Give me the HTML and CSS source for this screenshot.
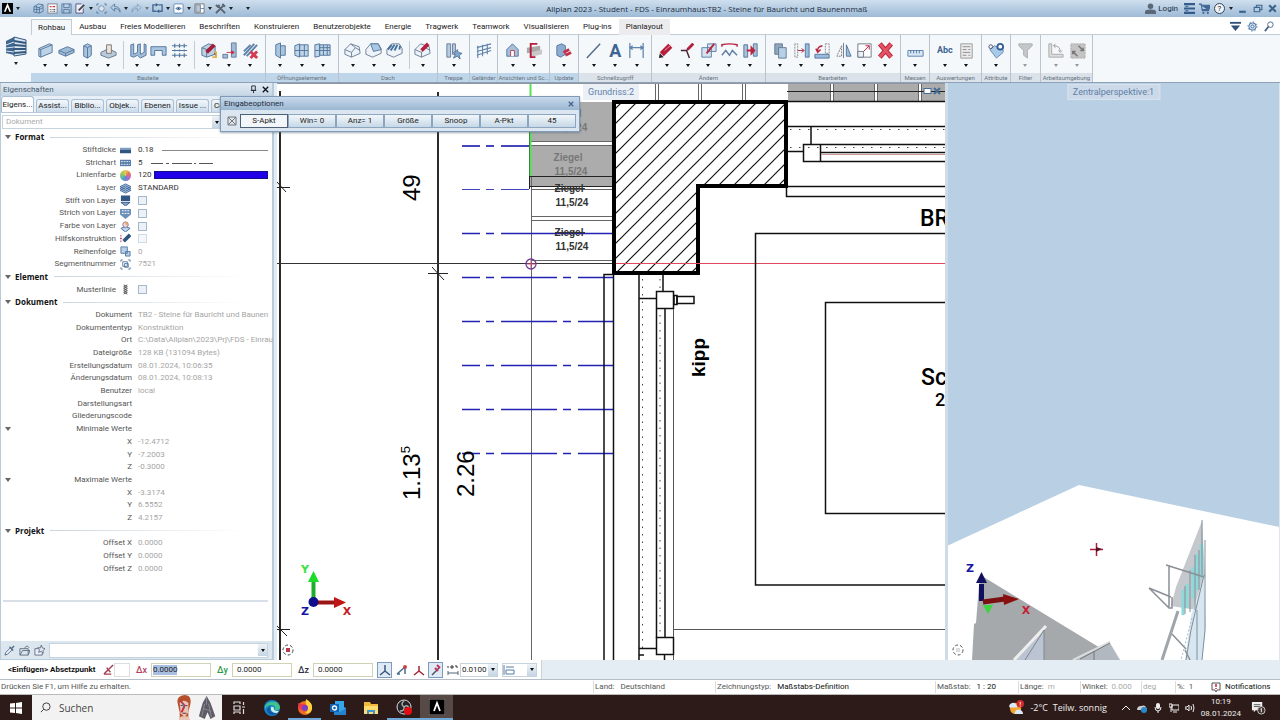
FILE: index.html
```html
<!DOCTYPE html>
<html lang="de">
<head>
<meta charset="utf-8">
<title>Allplan 2023</title>
<link rel="stylesheet" href="styles.css">
</head>
<body>
<div class="app">

<header class="titlebar">
  <div class="quick">
    <button class="qb logo" aria-label="Allplan"><svg viewBox="0 0 10 10"><rect width="10" height="10" fill="#050505"/><path d="M2.500 8L5 2L7.500 8" fill="none" stroke="#fff" stroke-width="1.500"/></svg></button><i class="dd"></i>
    <button class="qb first" aria-label="Neu"><svg viewBox="0 0 12 12"><path d="M1 4L6 1L11 2V9L7 11L1 10ZM1 7H7L11 5M7 4V11M4 3V10M1 4L7 5L11 2" class="ln"/></svg></button>
    <button class="qb" aria-label="Projekt"><svg viewBox="0 0 12 12"><rect x="1" y="1" width="10" height="10" fill="#fff" stroke="#75818e"/><path d="M3 4h2M6 4h3" stroke="#c33" stroke-width="1.500"/><path d="M3 7h1M5 7h1M7 7h2M3 9h1M5 9h1M7 9h2" stroke="#334" /></svg></button>
    <button class="qb" aria-label="Speichern"><svg viewBox="0 0 12 12"><path d="M1 1h10v10H1zM3 1v4h6V1M3 11V7h6v4" class="ln"/></svg></button>
    <button class="qb" aria-label="Bearbeiten"><svg viewBox="0 0 12 12"><path d="M9 6v5H1V1h6" fill="#eef" stroke="#557"/><path d="M4 8L10 2" stroke="#444" stroke-width="2"/></svg></button><i class="dd"></i>
    <button class="qb" aria-label="Suchen"><svg viewBox="0 0 12 12"><path d="M1 3V1h2M9 1h2v2M11 9v2H9M3 11H1V9" class="ln"/><circle cx="6" cy="6" r="3" fill="#dfe8f2" stroke="#7b8ea6"/></svg></button>
    <button class="qb" aria-label="Zurück"><svg viewBox="0 0 12 12"><path d="M11 10C11 5 8 4 5 4V1L1 5L5 9V6C8 6 10 7 11 10Z" class="ln"/></svg></button><i class="dd"></i>
    <button class="qb dim" aria-label="Vor"><svg viewBox="0 0 12 12"><path d="M1 10C1 5 4 4 7 4V1L11 5L7 9V6C4 6 2 7 1 10Z" class="ln"/></svg></button><i class="dd dim"></i>
    <button class="qb" aria-label="Wiederholen"><svg viewBox="0 0 12 12"><path d="M4 2H1v7h4M7 2h4v7H8" fill="none" stroke="#456a96" stroke-width="1.500"/><path d="M4 0l3 2-3 2zM8 7L5 9l3 2z" fill="#345781"/></svg></button><i class="dd"></i>
    <button class="qb" aria-label="Ansicht"><svg viewBox="0 0 12 12"><rect x="1" y="1" width="10" height="10" rx="1" fill="#fff" stroke="#6589b2"/><path d="M3 6Q6 3 9 6Q6 9 3 6Z" fill="#dce9f6" stroke="#4d759f"/><circle cx="6" cy="6" r="1" fill="#247"/></svg></button><i class="dd"></i>
    <button class="qb" aria-label="Fenster"><svg viewBox="0 0 12 12"><path d="M1 1h10v10H1z" fill="#fff" stroke="#777"/><path d="M2 2h5v8H2zM7 6h4" fill="#b8c7d5" stroke="#789"/></svg></button><i class="dd"></i>
    <button class="qb" aria-label="Werkzeuge"><svg viewBox="0 0 12 12"><path d="M1 11L9 3M3 3l8 8M1 2l2 2 2-2M8 1l3 3" fill="none" stroke="#59636f" stroke-width="2"/></svg></button><i class="dd"></i>
    <i class="dd more"></i>
  </div>
  <h1>Allplan 2023 - Student - FDS - Einraumhaus:TB2 - Steine für Bauricht und Baunennmaß</h1>
  <div class="winctl">
    <button class="login"><svg viewBox="0 0 10 10"><circle cx="5" cy="3" r="2.500" fill="#596777"/><path d="M0 10V8Q0 6 5 6Q10 6 10 8V10Z" fill="#596777"/></svg>Login</button>
    <button aria-label="Server"><svg viewBox="0 0 10 10"><path d="M0 1h10M0 5h10M0 9h10" stroke="#355c8c" stroke-width="2"/><path d="M1 3h3M1 7h3" stroke="#355c8c"/></svg></button>
    <button aria-label="Shop"><svg viewBox="0 0 10 10"><path d="M0 1h2l1 6h6M2 2h8l-1 4H3" fill="#426898" stroke="#426898"/><circle cx="4" cy="9" r="1" fill="#426898"/><circle cx="8" cy="9" r="1" fill="#426898"/></svg></button>
    <button class="help" aria-label="Hilfe">?</button><i class="dd"></i>
    <button aria-label="Minimieren"><svg viewBox="0 0 10 10"><path d="M2 8h6" stroke="#3d668f" stroke-width="2"/></svg></button>
    <button aria-label="Wiederherstellen"><svg viewBox="0 0 10 10"><path d="M4 4V2h5v4H7M2 4h5v4H2z" fill="none" stroke="#3d668f"/></svg></button>
    <button aria-label="Schließen"><svg viewBox="0 0 10 10"><path d="M2 2l6 6M8 2L2 8" stroke="#3d668f" stroke-width="2"/></svg></button>
  </div>
</header>

<div class="ribbon">
  <button class="role" aria-label="Rolle"><svg viewBox="0 0 22 22"><path d="M1 5L9 1V19L1 17Z" fill="#3f668f"/><path d="M9 1L21 4V18L9 20Z" fill="#dbe7f1" stroke="#34587f"/><path d="M9 5L21 7M9 9L21 10M9 13L21 13M9 17L21 16" stroke="#34587f" stroke-width="2"/><path d="M1 9L9 6M1 12L9 11M1 15L9 16" stroke="#dbe7f1"/></svg><i class="dd"></i></button>
  <div class="ribmain">
    <nav class="tabs">
      <button class="tab on">Rohbau</button><button class="tab">Ausbau</button><button class="tab">Freies Modellieren</button><button class="tab">Beschriften</button><button class="tab">Konstruieren</button><button class="tab">Benutzerobjekte</button><button class="tab">Energie</button><button class="tab">Tragwerk</button><button class="tab">Teamwork</button><button class="tab">Visualisieren</button><button class="tab">Plug-ins</button><button class="tab hov">Planlayout</button>
      <span class="tabtools">
        <button aria-label="Menüband"><svg viewBox="0 0 12 12"><path d="M0 2h12" stroke="#2f5078" stroke-width="2"/><path d="M1 5h10L6 11Z" fill="#2f5078"/></svg></button>
        <button aria-label="Optionen"><svg viewBox="0 0 12 12"><circle cx="6" cy="6" r="4" fill="#c5d7ea" stroke="#4a73a3"/><circle cx="6" cy="6" r="1.500" fill="#fff" stroke="#4a73a3"/><circle cx="6" cy="6" r="5" fill="none" stroke="#4a73a3" stroke-dasharray="1.500 2.400"/></svg></button>
        <button aria-label="Suche"><svg viewBox="0 0 12 12"><circle cx="7" cy="4" r="3" fill="none" stroke="#4a6487"/><path d="M5 6L1 11" stroke="#4a6487" stroke-width="2"/></svg></button>
      </span>
    </nav>
    <div class="groups">
      <section class="grp g237 sel"><div class="tools">
        <button class="rb" aria-label="Wand"><svg viewBox="0 0 20 20"><path d="M3 8L14 3L17 4V12L5 17L3 16Z" fill="#bcd2e6" stroke="#55779f"/><path d="M3 8L5 9V17M5 9L17 4" class="ln"/></svg></button>
        <button class="rb" aria-label="Decke"><svg viewBox="0 0 20 20"><path d="M2 10L11 6L18 9V12L9 16L2 13Z" fill="#9ebbd5" stroke="#55779f"/><path d="M2 10L9 13L18 9M9 13v3" class="ln"/></svg></button>
        <button class="rb" aria-label="Stütze"><svg viewBox="0 0 20 20"><path d="M6 5L10 3L14 5V15L10 18L6 16Z" fill="#a9c4dd" stroke="#55779f"/><path d="M6 5L10 7L14 5M10 7V18" class="ln"/></svg></button>
        <button class="rb" aria-label="Fundament"><svg viewBox="0 0 20 20"><path d="M2 12L10 8L18 12V15L10 18L2 15Z" fill="#b8c9da" stroke="#64788f"/><path d="M8 4h5v9H8z" fill="#eee4dc" stroke="#7c7775"/></svg></button>
        <i class="sep"></i>
        <button class="rb" aria-label="Profilwand"><svg viewBox="0 0 20 20"><path d="M3 4L6 3V14L10 12V4L13 3V14L17 12V3L19 4V15L13 18L10 15L6 17L3 16Z" fill="#a2bdd8" stroke="#55779f"/></svg></button>
        <button class="rb" aria-label="Unterzug"><svg viewBox="0 0 20 20"><path d="M2 6H18V15H14V10H6V15H2Z" fill="#aac5df" stroke="#55779f"/></svg></button>
        <button class="rb" aria-label="Raster"><svg viewBox="0 0 20 20"><path d="M2 5h16M2 10h16M2 15h16M5 3v4M5 9v2M5 13v4M10 3v4M10 9v2M10 13v4M15 3v4M15 9v2M15 13v4" stroke="#56789e" stroke-width="1.300"/></svg></button>
        <i class="sep"></i>
        <button class="rb" aria-label="Bauteil ändern"><svg viewBox="0 0 20 20"><path d="M3 7L10 3L17 5V14L8 17L3 15Z" fill="#bed0e1" stroke="#55779f"/><path d="M3 7L8 9L17 5M8 9v8" class="ln"/><path d="M8 12L16 4" stroke="#a51d36" stroke-width="4"/><path d="M16 12h2v6M14 17h3" stroke="#e2b24d" stroke-width="2"/></svg></button>
        <button class="rb" aria-label="Anschluss"><svg viewBox="0 0 20 20"><path d="M12 2h5v15h-5zM3 14h5v4H3z" fill="#9ebbd8" stroke="#667f9b"/><path d="M7 12h7M12 10l3 2-3 2" stroke="#c4344c" fill="#b51c36"/></svg></button>
        <button class="rb" aria-label="Bauteil löschen"><svg viewBox="0 0 20 20"><path d="M3 15L14 3M6 16L17 4M3 11L10 4" stroke="#5e82aa" stroke-width="2"/><path d="M10 11l7 7M17 11l-7 7" stroke="#d33b54" stroke-width="3"/></svg></button>
      </div><h2>Bauteile</h2></section>
      <section class="grp g73 sel"><div class="tools">
        <button class="rb" aria-label="Tür"><svg viewBox="0 0 20 20"><path d="M5 4L10 2V18L5 15ZM10 5H15V15H10" fill="#a9c4dd" stroke="#55779f"/></svg></button>
        <button class="rb" aria-label="Fenster"><svg viewBox="0 0 20 20"><path d="M3 5L8 3V17L3 15ZM8 4H17V16H8Z" fill="#bed4e7" stroke="#55779f"/><path d="M3 10H17M13 4V16" class="ln"/></svg></button>
        <button class="rb" aria-label="Fassade"><svg viewBox="0 0 20 20"><path d="M2 4L7 3V16L2 17ZM7 4H18V15H7Z" fill="#bed4e7" stroke="#55779f"/><path d="M2 10H18M11 4V15M15 4V15M7 7H18" class="ln"/></svg></button>
      </div><h2>Öffnungselemente</h2></section>
      <section class="grp g100 sel"><div class="tools">
        <button class="rb" aria-label="Dachebene"><svg viewBox="0 0 20 20"><path d="M2 9L8 3L17 6L18 13L9 17L2 14ZM2 9L9 12V17M9 12L13 7L18 10M8 3L13 7" fill="#edf3f8" stroke="#6c8299"/></svg></button>
        <button class="rb" aria-label="Dachhaut"><svg viewBox="0 0 20 20"><path d="M2 9L7 3L15 3L18 8V13L9 17L2 14Z" fill="#edf3f8" stroke="#6c8299"/><path d="M7 3H15L18 9L10 11Z" fill="#a9c8e3" stroke="#55779f"/></svg></button>
        <button class="rb" aria-label="Sparren"><svg viewBox="0 0 20 20"><path d="M2 9L7 3L15 3L18 8V13L9 17L2 14Z" fill="#edf3f8" stroke="#6c8299"/><path d="M3 9L7 4M6 10L10 4M10 10L13 4M15 9L16 5" stroke="#46719f" stroke-width="2"/></svg></button>
        <i class="sep"></i>
        <button class="rb" aria-label="Dach ändern"><svg viewBox="0 0 20 20"><path d="M2 9L8 3L17 6L18 13L9 17L2 14ZM2 9L9 12V17M9 12L13 7L18 10" fill="#edf3f8" stroke="#6c8299"/><path d="M9 10L16 3" stroke="#b92040" stroke-width="4"/></svg></button>
      </div><h2>Dach</h2></section>
      <section class="grp g31 sel"><div class="tools">
        <button class="rb" aria-label="Treppe"><svg viewBox="0 0 20 20"><path d="M3 3h4v14H3zM9 3h3v11H9z" fill="#b8cce0" stroke="#667d98"/><path d="M14 9l1 3 4 1-3 2 1 4-3-3-4 2 2-4-2-2 3-1z" fill="#83a8ce" stroke="#55779f"/></svg></button>
      </div><h2>Treppe</h2></section>
      <section class="grp g28 sel nodd"><div class="tools">
        <button class="rb" aria-label="Geländer"><svg viewBox="0 0 20 20"><path d="M3 7L18 3M3 11L18 7M3 15L18 10M4 5V18M9 4V16M14 3V14" stroke="#6385aa" stroke-width="1.200"/></svg></button>
      </div><h2>Geländer</h2></section>
      <section class="grp g51 sel"><div class="tools">
        <button class="rb" aria-label="Ansicht"><svg viewBox="0 0 20 20"><path d="M4 9L10 3L16 9V16H4Z" fill="#a6c0da" stroke="#56779c"/><path d="M8 16v-6h4v6" fill="#fff" stroke="#b94458"/></svg></button>
        <button class="rb" aria-label="Schnitt"><svg viewBox="0 0 20 20"><path d="M2 7L16 5V11L2 13Z" fill="#a9a9a9"/><path d="M5 12L18 9V14L5 17Z" fill="#c9c9c9"/><path d="M13 3H6V17H11" fill="none" stroke="#b51d3c" stroke-width="2"/></svg></button>
      </div><h2>Ansichten und Sc...</h2></section>
      <section class="grp g29 sel"><div class="tools">
        <button class="rb" aria-label="Update"><svg viewBox="0 0 20 20"><path d="M3 5L8 3L12 5V14L7 17L3 15Z" fill="#8dadd0" stroke="#55779f"/><path d="M10 12l6-3M12 15l6-3" stroke="#c72e49" stroke-width="3"/></svg></button>
      </div><h2>Update</h2></section>
      <section class="grp g73"><div class="tools">
        <button class="rb" aria-label="Linie"><svg viewBox="0 0 20 20"><path d="M3 18L17 3" stroke="#536b88" stroke-width="1.500"/></svg></button>
        <button class="rb big" aria-label="Text">A</button>
        <button class="rb" aria-label="Maßlinie"><svg viewBox="0 0 20 20"><path d="M3 2V18M17 2V18M3 7H17M6 5L3 7L6 9M14 5L17 7L14 9" fill="none" stroke="#5e83ac" stroke-width="1.300"/></svg></button>
      </div><h2>Schnellzugriff</h2></section>
      <section class="grp g114"><div class="tools">
        <button class="rb" aria-label="Ändern"><svg viewBox="0 0 20 20"><path d="M5 14L14 5" stroke="#b51d3c" stroke-width="6"/><path d="M8 10L15 4" stroke="#ee9eab"/><path d="M2 18l1-5 4 4z" fill="#222"/></svg></button>
        <button class="rb" aria-label="Knick"><svg viewBox="0 0 20 20"><path d="M3 10H9L12 18M9 10L16 3" fill="none" stroke="#4a2030" stroke-width="1.500"/><path d="M10 9L16 3" stroke="#b51d3c" stroke-width="3"/></svg></button>
        <button class="rb" aria-label="Formateigenschaften"><svg viewBox="0 0 20 20"><path d="M3 7H13V17H3ZM9 3H18V11H9Z" fill="#d5e3ef" stroke="#5d82aa"/><path d="M8 13L16 3" stroke="#b82442" stroke-width="2" fill="none"/></svg></button>
        <button class="rb" aria-label="Verzerren"><svg viewBox="0 0 20 20"><path d="M2 6V4Q10 2 18 4V6" fill="none" stroke="#b82442" stroke-width="1.500"/><path d="M2 15L6 10L10 15L13 10L18 15" fill="none" stroke="#5f7e9f" stroke-width="1.500"/></svg></button>
        <button class="rb" aria-label="Verbinden"><svg viewBox="0 0 20 20"><path d="M3 4h4v13H3zM13 3h4v13h-4z" fill="#a8c2dc" stroke="#587799"/><path d="M6 10h7M11 7l3 3-3 3z" stroke="#b82442" stroke-width="2"/></svg></button>
      </div><h2>Ändern</h2></section>
      <section class="grp g136"><div class="tools">
        <button class="rb" aria-label="Kopieren"><svg viewBox="0 0 20 20"><path d="M4 3H12V14H4Z" fill="#8fa6bd" stroke="#657c96"/><path d="M8 7H16V18H8Z" fill="#b7d0e7" stroke="#657c96"/></svg></button>
        <button class="rb" aria-label="Verschieben"><svg viewBox="0 0 20 20"><path d="M3 3v14h3V3z" fill="none" stroke="#888" stroke-dasharray="2 1"/><path d="M14 3h4v14h-4z" fill="#9bbddd" stroke="#55779f"/><path d="M6 10h6M10 8l3 2-3 2" fill="none" stroke="#b82442"/></svg></button>
        <button class="rb" aria-label="Drehen"><svg viewBox="0 0 20 20"><path d="M2 14H17V18H2Z" fill="#9bbddd" stroke="#55779f"/><path d="M13 3h4v10h-4z" fill="none" stroke="#888" stroke-dasharray="2 1"/><path d="M5 11Q4 6 10 5M3 8L5 12L8 9" fill="none" stroke="#b82442" stroke-width="1.500"/></svg></button>
        <button class="rb" aria-label="Spiegeln"><svg viewBox="0 0 20 20"><path d="M8 5V16H3Z" fill="none" stroke="#777" stroke-dasharray="2 1"/><path d="M10 2V18" stroke="#778"/><path d="M13 4V16H18Z" fill="#9bbddd" stroke="#55779f"/></svg></button>
        <button class="rb" aria-label="Skalieren"><svg viewBox="0 0 20 20"><path d="M3 3H17V17H3Z" fill="#fff" stroke="#727b85"/><path d="M3 11H9V17H3Z" fill="#edf0f4" stroke="#727b85"/><path d="M9 11L15 5M11 5H15V9" fill="none" stroke="#b82442"/></svg></button>
        <button class="rb" aria-label="Löschen"><svg viewBox="0 0 20 20"><path d="M4 3L16 17M16 3L4 17" stroke="#b8283e" stroke-width="5"/><path d="M4 3L16 17M16 3L4 17" stroke="#e45464" stroke-width="3"/></svg></button>
      </div><h2>Bearbeiten</h2></section>
      <section class="grp g29"><div class="tools">
        <button class="rb" aria-label="Messen"><svg viewBox="0 0 20 20"><path d="M2 10H18V16H2Z" fill="#d8e7f5" stroke="#5c84ae"/><path d="M5 10v3M8 10v3M11 10v3M14 10v3" class="ln"/></svg></button>
      </div><h2>Messen</h2></section>
      <section class="grp g51"><div class="tools">
        <button class="rb abc">Abc</button>
        <button class="rb" aria-label="Liste"><svg viewBox="0 0 20 20"><path d="M4 3H16V18H4Z" fill="#ececec" stroke="#999"/><path d="M6 6h8M6 9h4M12 9h2M6 12h8M6 15h4M12 15h2" stroke="#8b8b8b"/></svg></button>
      </div><h2>Auswertungen</h2></section>
      <section class="grp g29"><div class="tools">
        <button class="rb" aria-label="Attribute"><svg viewBox="0 0 20 20"><path d="M4 9L9 5L18 9L18 12L11 18Z" fill="#a9c9e9" stroke="#658db7"/><circle cx="5" cy="6" r="2" fill="none" stroke="#557"/><circle cx="15" cy="6" r="3" fill="#fff" stroke="#356094" stroke-width="2"/></svg></button>
      </div><h2>Attribute</h2></section>
      <section class="grp g29 off"><div class="tools">
        <button class="rb" aria-label="Filter"><svg viewBox="0 0 20 20"><path d="M3 3H17V5L12 10V18L8 15V10L3 5Z" fill="#c4c6c8" stroke="#acb0b4"/></svg></button>
      </div><h2>Filter</h2></section>
      <section class="grp g52 off"><div class="tools">
        <button class="rb" aria-label="Koordinaten"><svg viewBox="0 0 20 20"><path d="M3 3h3v11h12v3H3z" fill="#ddd" stroke="#aaa"/><path d="M8 5Q15 5 15 11M10 3L8 5L10 7M13 10l2 2 2-2" fill="none" stroke="#999"/></svg></button>
        <button class="rb" aria-label="Raster"><svg viewBox="0 0 20 20"><path d="M3 3H18V18H3Z" fill="#c4c4c4" stroke="#aaa" stroke-dasharray="2 1"/><path d="M5 11l5 5M11 5l5 5M5 14v-3h3M16 7v3h-3" fill="none" stroke="#777" stroke-width="1.500"/></svg></button>
      </div><h2>Arbeitsumgebung</h2></section>
    </div>
  </div>
</div>

<main class="work">
  <aside class="panel">
    <header class="phead"><span>Eigenschaften</span><svg viewBox="0 0 10 10"><path d="M3 1h4v5H3zM2 6h6M5 6v3" fill="none" stroke="#223"/></svg><svg viewBox="0 0 10 10"><path d="M2 2l6 6M8 2L2 8" stroke="#112" stroke-width="1.500"/></svg></header>
    <nav class="ptabs"><button class="on">Eigens...</button><button>Assist...</button><button>Biblio...</button><button>Objek...</button><button>Ebenen</button><button>Issue ...</button><button class="last">Co</button></nav>
    <div class="combo"><select aria-label="Auswahl"><option>Dokument</option></select><i class="arrow"></i></div>
    <div class="props">
      <div class="sec">Format</div>
      <div class="row ic"><span>Stiftdicke</span><svg viewBox="0 0 12 12"><path d="M0 4h12" stroke="#7da0c6" stroke-width="2"/><path d="M0 7h12" stroke="#315684" stroke-width="4"/></svg><b>0.18<i class="thin"></i></b></div>
      <div class="row ic"><span>Strichart</span><svg viewBox="0 0 12 12"><path d="M0 3h12v7H0z" fill="#587ca9"/><path d="M1 5h10M1 8h10" stroke="#e5eef8" stroke-dasharray="2 1"/></svg><b>5<svg class="dash" viewBox="0 0 62 4" preserveAspectRatio="xMinYMid"><path d="M0 2.500h12M15 2.500h3M21 2.500h20M43 2.500h2M48 2.500h14" stroke="#555"/></svg></b></div>
      <div class="row ic"><span>Linienfarbe</span><i class="wheel"></i><b>120<i class="blue"></i></b></div>
      <div class="row ic"><span>Layer</span><svg viewBox="0 0 12 12"><path d="M0 8l6-3 6 3-6 3zM0 6l6-3 6 3-6 3zM0 4l6-3 6 3-6 3z" fill="#a9c3df" stroke="#436b9b"/></svg><b>STANDARD</b></div>
      <label class="row ic"><span>Stift von Layer</span><svg viewBox="0 0 12 12"><path d="M1 2h10M1 5h10" stroke="#315684" stroke-width="3"/><path d="M1 8h10l-5 4z" fill="#86a8cc" stroke="#315684"/></svg><input type="checkbox"></label>
      <label class="row ic"><span>Strich von Layer</span><svg viewBox="0 0 12 12"><path d="M0 1h12v6l-6 5-6-5z" fill="#6d90b9"/><path d="M2 3h8M2 6h8" stroke="#fff" stroke-dasharray="2 1"/></svg><input type="checkbox"></label>
      <label class="row ic"><span>Farbe von Layer</span><svg viewBox="0 0 12 12"><path d="M1 8l5-2 5 2-5 4z" fill="#bfd6ef" stroke="#436b9b"/><circle cx="6" cy="4" r="3" fill="#e8dbe7" stroke="#976f8b"/><path d="M6 1v3h3A3 3 0 0 0 6 1" fill="#e9a34e"/></svg><input type="checkbox"></label>
      <label class="row ic"><span>Hilfskonstruktion</span><svg viewBox="0 0 12 12"><path d="M1 2v9M0 6h3" stroke="#c33a57" stroke-dasharray="2 1"/><path d="M4 9L11 2" stroke="#30557c" stroke-width="4"/></svg><input type="checkbox" disabled></label>
      <div class="row ic ro"><span>Reihenfolge</span><svg viewBox="0 0 12 12"><path d="M1 1h7v7H1zM6 6h5v5H6z" fill="#b7cfe7" stroke="#547aa4"/></svg><b>0</b></div>
      <div class="row ic ro"><span>Segmentnummer</span><svg viewBox="0 0 12 12"><path d="M1 3V1h2M9 1h2v2M11 9v2H9M3 11H1V9M3 3h5v5H3zM5 5h4v4H5z" class="ln"/></svg><b>7521</b></div>
      <div class="sec">Element</div>
      <label class="row ic"><span>Musterlinie</span><svg viewBox="0 0 12 12"><path d="M4 1l4 2-4 2 4 2-4 2 4 2M8 1L4 3l4 2-4 2 4 2-4 2" fill="none" stroke="#555"/></svg><input type="checkbox"></label>
      <div class="sec">Dokument</div>
      <div class="row ro"><span>Dokument</span><b>TB2 - Steine für Bauricht und Baunen</b></div>
      <div class="row ro"><span>Dokumententyp</span><b>Konstruktion</b></div>
      <div class="row ro"><span>Ort</span><b>C:\Data\Allplan\2023\Prj\FDS - Einrau</b></div>
      <div class="row ro"><span>Dateigröße</span><b>128 KB (131094 Bytes)</b></div>
      <div class="row ro"><span>Erstellungsdatum</span><b>08.01.2024, 10:06:35</b></div>
      <div class="row ro"><span>Änderungsdatum</span><b>08.01.2024, 10:08:13</b></div>
      <div class="row ro"><span>Benutzer</span><b>local</b></div>
      <div class="row ro"><span>Darstellungsart</span><b></b></div>
      <div class="row ro"><span>Gliederungscode</span><b></b></div>
      <div class="row ro sub"><span>Minimale Werte</span><b></b></div>
      <div class="row ro"><span>X</span><b>-12.4712</b></div>
      <div class="row ro"><span>Y</span><b>-7.2003</b></div>
      <div class="row ro"><span>Z</span><b>-0.3000</b></div>
      <div class="row ro sub"><span>Maximale Werte</span><b></b></div>
      <div class="row ro"><span>X</span><b>-3.3174</b></div>
      <div class="row ro"><span>Y</span><b>6.5552</b></div>
      <div class="row ro"><span>Z</span><b>4.2157</b></div>
      <div class="sec">Projekt</div>
      <div class="row ro"><span>Offset X</span><b>0.0000</b></div>
      <div class="row ro"><span>Offset Y</span><b>0.0000</b></div>
      <div class="row ro"><span>Offset Z</span><b>0.0000</b></div>
    </div>
    <div class="rule"></div>
    <footer class="pfoot">
      <button aria-label="Übernehmen"><svg viewBox="0 0 12 12"><path d="M1 11L2 8L7 3L9 5L4 10Z" fill="#eef" stroke="#526c8b"/><path d="M6 2l4 4M8 4l3-3" stroke="#526c8b" stroke-width="1.500"/></svg></button>
      <button aria-label="Öffnen"><svg viewBox="0 0 12 12"><path d="M1 4h9v7H1zM1 11l3-5h8l-2 5M6 3l3-2 2 2" fill="#dbe4ed" stroke="#60717f"/></svg></button>
      <button aria-label="Favorit"><svg viewBox="0 0 12 12"><path d="M1 4h8v7H1z" fill="#eef" stroke="#60717f"/><path d="M8 0l1 3 3 1-2 2v3L8 7 5 8l1-3-2-2 3 0z" fill="#dfe7f0" stroke="#60717f"/></svg></button>
      <div class="combo low"><select aria-label="Favoriten"><option></option></select><i class="arrow"></i></div>
    </footer>
  </aside>

  <section class="plan">
    <svg class="draw" viewBox="277 83 668 577" preserveAspectRatio="xMinYMin slice">
      <defs>
        <pattern id="hatch" width="15" height="15" patternUnits="userSpaceOnUse" patternTransform="translate(4 0)"><path d="M-1 16L16 -1M-1 1L1 -1M14 16L16 14" stroke="#111" stroke-width="1.200"/></pattern>
      </defs>
      <rect x="277" y="83" width="668" height="577" fill="#fff"/>
      <g fill="#acacac"><path d="M530 102H613V142H530ZM530 146H613V187H530Z"/><path d="M788 84H945V102H788Z"/></g>
      <g stroke="#fff" stroke-width="3"><path d="M832 84V101M876 84V101M920 84V101"/></g>
      <g stroke="#666" fill="none"><path d="M655.500 84V101M658.500 84V101M698.500 84V101M701.500 84V101M742.500 84V101M745.500 84V101M830.500 84V101M833.500 84V101M874.500 84V101M877.500 84V101M918.500 84V101M921.500 84V101"/><path d="M530 141.500H613M530 145.500H613M531 189.500H613M531 216.500H613M531 220.500H613M531 260.500H613"/><path d="M531.500 176V660"/></g>
      <path d="M529.500 131V189M529 176.500H613M529 186.500H613M787 91.500H945" stroke="#222"/>
      <path d="M530.500 83V176" stroke="#54e354" stroke-width="2"/>
      <g stroke="#2b2b2b" stroke-width="2"><path d="M280 91V660M438 92V660"/></g>
      <g stroke="#222"><path d="M277 187.500H290M277 182L286 192M428 273.500H448M432 267L444 280M277 629.500H290M277 626L287 636"/></g>
      <g stroke="#4444bb"><path d="M462 146H480M486 146H494M501 146H529" stroke-width="2"/><path d="M462 189.500H480M486 189.500H494M501 189.500H529"/></g>
      <g stroke="#2222b5" stroke-width="1.500" fill="none"><path d="M462 233.500H480M486 233.500H494M501 233.500H613"/><path stroke-dasharray="18 6 8 7 56 6 8 7 36" d="M462 277.500H613M462 321.500H613M462 365.500H613M462 409.500H613M462 453.500H613"/></g>
      <g class="brick"><text x="567" y="117" fill="#777">Ziegel</text><text x="571" y="131" fill="#777">11,5/24</text><text x="568" y="161" fill="#777">Ziegel</text><text x="571" y="175" fill="#777">11,5/24</text><text x="569" y="192">Ziegel</text><text x="572" y="206">11,5/24</text><text x="569" y="236">Ziegel</text><text x="572" y="250">11,5/24</text></g>
      <path d="M555 188.500H585M555 232.500H585" stroke="#333"/>
      <path d="M277 263.500H613" stroke="#333"/>
      <path d="M614 102H786V186H698V273H614Z" fill="#fff"/>
      <path d="M614 102H786V186H698V273H614Z" fill="url(#hatch)" stroke="#000" stroke-width="4"/>
      <path d="M616 263.500H945" stroke="#e0485c"/>
      <g fill="none" stroke="#111" stroke-width="1.500">
        <path d="M788 101.500H945M788 126.500H945M811 126V145M788 151.500H803M821 144.500H945M821 152.500H945M821 161.500H945M788 186.500H945M786.500 188V196.500H945"/>
        <rect x="803.500" y="144.500" width="17" height="17"/>
        <path d="M945 233.500H755.500V585H945M945 302.500H825.500V513.500H945"/>
        <path d="M604 660V274.500H614M613.500 275V660M639 275V660M663 275V291M639 298.500H656M656.500 309V638M665 309V638M639 648.500H656M664.500 655V660M639 655H644"/>
        <rect x="656.500" y="291.500" width="17" height="17"/><rect x="677" y="296.500" width="17" height="7"/><rect x="674" y="295.500" width="3" height="9"/><rect x="656.500" y="637.500" width="17" height="17"/>
      </g>
      <path d="M673.500 309V637M673.500 655V660M674 629.500H945" stroke="#555"/>
      <path d="M821 154.500H945" stroke="#c99"/>
      <g stroke="#444" stroke-dasharray="1.500 7.500"><path d="M790 129.500H945M790 147.500H945"/><path d="M642.500 279V648M660 279V290M660 315V637" stroke-dasharray="1.500 6"/></g>
      <g class="meas"><text transform="translate(420 201) rotate(-90)">49</text><text transform="translate(420 500) rotate(-90)">1.13<tspan dy="-10" class="sup">5</tspan></text><text transform="translate(474 497) rotate(-90)">2.26</text></g>
      <g class="lab"><text x="920" y="226">BR</text><text x="921" y="385">Sc</text><text x="935" y="406" class="num">2</text></g>
      <text class="kipp" transform="translate(705 377) rotate(-90)">kipp</text>
      <circle cx="531" cy="264" r="5" fill="none" stroke="#6a3d95" stroke-width="1.300"/><path d="M527 264H535M531 260V268" stroke="#d8506a"/>
      <path d="M313.500 602V581" stroke="#1fae2c" stroke-width="4"/><path d="M308 582L313.500 571L319 582Z" fill="#1bdc28"/>
      <path d="M314 602.500H335" stroke="#9c1515" stroke-width="4"/><path d="M334 597L346 602.500L334 608Z" fill="#c01515"/><circle cx="313.500" cy="602" r="5" fill="#10108e"/>
      <g class="axis"><text x="305" y="573" fill="#35e442">Y</text><text x="305" y="615" fill="#1515a5">Z</text><text x="347" y="615" fill="#c3202c">X</text></g>
      <circle cx="288" cy="650" r="5" fill="none" stroke="#444" stroke-dasharray="3 2"/><rect x="286" y="648" width="4" height="4" fill="#b83650"/>
      <path d="M277 83.500H945" stroke="#8e959c"/>
      <rect x="924" y="88.500" width="7" height="5" fill="#fff" stroke="#456c95"/><path d="M934 88l6 6M940 88l-6 6" stroke="#456c95" stroke-width="2"/>
    </svg>
    <div class="vtab">Grundriss:2</div>
  </section>

  <section class="view3d">
    <svg class="draw" viewBox="948 83 331 577" preserveAspectRatio="xMinYMax slice">
      <rect x="948" y="83" width="331" height="577" fill="#b9d0e4"/>
      <path d="M948 545.500L1079 485L1279 527V660H948Z" fill="#fff"/>
      <path d="M982 576L1120 660H972L974 624L976 623L979 585Z" fill="#a6a9ac"/>
      <path d="M1014 660L1044 627L1044 660Z" fill="#bac4d2"/><path d="M1014 660L1046 626" stroke="#eee" stroke-width="3"/><path d="M1025 660L1044 630V660" stroke="#81868b" fill="none"/>
      <path d="M1075 660L1110 643L1120 660Z" fill="#b1b8bf"/><path d="M1073 660L1110 642" stroke="#d9dddf" stroke-width="2"/><path d="M1080 659L1110 643M1094 651V660" stroke="#777"/>
      <path d="M1202 521L1205 575L1197 610L1171 606L1176 587Z" fill="#c5c8cc"/>
      <path d="M1204 575L1206 627L1202 660H1185L1191 616Z" fill="#d8e6f1"/>
      <path d="M1183 590V615M1187 584V608M1193 567V598M1197 554V590M1201 544V578" stroke="#8dd8d8" stroke-width="3"/>
      <path d="M1185 586V614M1190 570V612M1195 555V610M1199 550V590M1202 520V575M1205 540V630L1202 660M1197 610V660M1186 660L1191 630L1204 575" fill="none" stroke="#7c9199"/>
      <path d="M1166 565L1204 577M1169 565V607M1149 588L1171 597M1149 588L1169 608L1172 608V597M1172 634L1186 649M1185 650L1190 660" fill="none" stroke="#8a9096" stroke-width="1.500"/>
      <path d="M1178 611L1162 660" stroke="#a0a5aa" stroke-width="3"/><path d="M1192 618L1181 660" stroke="#abc" stroke-dasharray="2 2"/>
      <path d="M1090 549.500H1103M1096.500 543V556" stroke="#a8203b" stroke-width="1.500"/><path d="M1096 547L1102 549L1096 552Z" fill="#512"/>
      <path d="M981.500 601V584" stroke="#10105f" stroke-width="5"/><path d="M976 583L981.500 572L987 583Z" fill="#111160"/>
      <path d="M983 602L1005 599" stroke="#7b1010" stroke-width="5"/><path d="M1003 594L1019 599L1004 605Z" fill="#8a1010"/><path d="M983 605H993L988 614Z" fill="#3ed43e"/>
      <g class="axis"><text x="970" y="572" fill="#1717a5">Z</text><text x="1026" y="614" fill="#c41f35">X</text></g>
      <circle cx="958" cy="650" r="5" fill="none" stroke="#555" stroke-dasharray="3 2"/><rect x="956" y="648" width="4" height="4" fill="#ddd"/>
    </svg>
    <div class="vtab">Zentralperspektive:1</div>
  </section>

  <div class="float" role="dialog" aria-label="Eingabeoptionen">
    <header>Eingabeoptionen<svg viewBox="0 0 8 8"><path d="M1 1l6 6M7 1L1 7" stroke="#3d6289" stroke-width="1.500"/></svg></header>
    <div class="opts"><svg viewBox="0 0 10 10"><path d="M1 1h8v8H1zM1 1l8 8M9 1L1 9" fill="none" stroke="#777"/></svg><button class="on">S-Apkt</button><button>Win= 0</button><button>Anz= 1</button><button>Größe</button><button>Snoop</button><button>A-Pkt</button><button>45</button></div>
  </div>
</main>

<div class="inputbar"><div class="inwrap">
  <strong>&lt;Einfügen&gt; Absetzpunkt</strong><svg viewBox="0 0 12 12"><path d="M1 11L11 1M1 11h8M4 4l4 5" fill="none" stroke="#a33c4f" stroke-width="1.500"/></svg><input class="tiny" aria-label="Punkt">
  <label><span class="r">Δx</span><input value="0.0000" class="hl"></label>
  <label><span class="g">Δy</span><input value="0.0000"></label>
  <label><span>Δz</span><input value="0.0000"></label>
  <div class="snap">
    <button class="on" aria-label="Koordinaten"><svg viewBox="0 0 12 12"><path d="M6 1v6L1 11M6 7l5 4" fill="none" stroke="#36587e" stroke-width="1.500"/></svg></button>
    <button aria-label="Winkel"><svg viewBox="0 0 12 12"><path d="M1 10L9 3M1 10h3M9 3v7" fill="none" stroke="#4a6d8d" stroke-width="1.500"/><circle cx="9" cy="3" r="2" fill="#c44"/></svg></button>
    <button aria-label="Dreibein"><svg viewBox="0 0 12 12"><path d="M6 2v5L1 11M6 7l5 4" fill="none" stroke="#a3243a" stroke-width="1.500"/></svg></button>
    <button class="on" aria-label="Punktfang"><svg viewBox="0 0 12 12"><path d="M2 11L9 4" stroke="#456" stroke-width="1.500"/><path d="M5 4l3 3M7 1l3 3" stroke="#c23456" stroke-width="2"/></svg></button>
    <button aria-label="Länge"><svg viewBox="0 0 12 12"><path d="M1 9h10M1 7v4M11 7v4" stroke="#567"/><path d="M1 2v2M4 2h2v2H4zM8 2h2v2" fill="none" stroke="#333"/></svg></button>
  </div>
  <div class="combo step"><select aria-label="Raster"><option>0.0100</option></select><i class="arrow"></i></div>
  <div class="combo step2"><svg viewBox="0 0 12 12"><path d="M1 1v10M3 3h8M3 6h8v4H3z" fill="none" stroke="#567aa3"/></svg><select aria-label="Leiste"><option></option></select><i class="arrow"></i></div>
</div></div>

<div class="status"><span>Drücken Sie F1, um Hilfe zu erhalten.</span><span>Land: &nbsp; Deutschland</span><span>Zeichnungstyp: &nbsp; <b>Maßstabs-Definition</b></span><span>Maßstab: &nbsp; <b>1 : 20</b></span><span>Länge: &nbsp;<em>m</em></span><span>Winkel: &nbsp;<em>0.000</em></span><span><em>deg</em></span><span>%: &nbsp;1</span><span class="note"><svg viewBox="0 0 10 10"><path d="M1 1h8v7H6l-1 2-1-2H1z" fill="#fff" stroke="#555"/><path d="M5 2v3M5 6v1" stroke="#c23" stroke-width="1.500"/></svg><b>Notifications</b></span></div>

<footer class="taskbar">
  <button class="tb start" aria-label="Start"><svg viewBox="0 0 12 12"><path d="M0 1.500L5 1V5.500H0ZM6 1L12 0V5.500H6ZM0 6.500H5V11L0 10.500ZM6 6.500H12V12L6 11Z" fill="#fff"/></svg></button>
  <label class="search"><svg viewBox="0 0 12 12"><circle cx="7" cy="5" r="4" fill="none" stroke="#333"/><path d="M4 8L1 11" stroke="#333"/></svg><input placeholder="Suchen" aria-label="Suchen">
    <svg class="pic" viewBox="0 0 42 26"><path d="M1 9Q-1 1 8 0Q16 0 14 10L12 18V25H3V18Z" fill="#b5502c"/><path d="M3 8Q7 4 12 8V18L8 23L4 19Z" fill="#e8c4b5"/><path d="M2 26Q3 22 6 22H10Q13 22 14 26Z" fill="#e8c4b5"/><path d="M4 6L8 11L5 18" stroke="#d3273e" stroke-width="2" fill="none"/><path d="M6 8L8 14" stroke="#3980b7"/><path d="M4 11h2M9 11h2M6 19h4" stroke="#533"/><path d="M31 1L35 8L40 22L35 25L32 18L29 25L23 22L27 8Z" fill="#5c5b66"/><path d="M31 2v8M29 9l-3 13M33 9l3 14M27 14l9 3" stroke="#8a8892"/></svg></label>
  <button class="tb" aria-label="Aufgabenansicht"><svg viewBox="0 0 16 16"><path d="M3 4V2h6v2M3 6h6v4H3zM3 14v-2h6v2M12.500 2v3M12.500 9v5M11 7h3" fill="none" stroke="#ddd" stroke-width="1.200"/></svg></button>
  <button class="tb" aria-label="Edge"><svg viewBox="0 0 16 16"><circle cx="8" cy="8" r="8" fill="#1784ce"/><path d="M1 6C4 0 16 0 16 8Q15 11 11 10Q12 5 7 5Q3 5 1 9Z" fill="#3fc38a"/><path d="M6 9Q6 13 13 13Q8 17 4 13Q1 8 7 6Q5 7 6 9Z" fill="#145aa2"/><path d="M7 7Q10 6 10 9Q10 11 15 11L13 13Q6 13 7 7Z" fill="#c5efe7"/></svg></button>
  <button class="tb run" aria-label="Firefox"><svg viewBox="0 0 16 16"><circle cx="8" cy="9" r="7" fill="#f16a25"/><path d="M9 0Q16 4 15 10Q13 16 8 14Q12 12 10 7Q8 6 9 0Z" fill="#ffd23a"/><path d="M1 4L5 5Q12 5 10 10Q7 14 4 10L2 11Z" fill="#e9384f"/><circle cx="8" cy="9" r="3" fill="#7c3fc5"/></svg></button>
  <button class="tb" aria-label="Outlook"><svg viewBox="0 0 16 16"><path d="M5 1h9v6l2 1v7H4V7h1z" fill="#36a7e8"/><path d="M4 8l6 4 6-4v7H4z" fill="#2682cd"/><path d="M0 4h9v8H0z" fill="#1265b5"/><circle cx="4.500" cy="8" r="2" fill="none" stroke="#fff" stroke-width="1.300"/></svg></button>
  <button class="tb" aria-label="Explorer"><svg viewBox="0 0 16 16"><path d="M1 2h6l1 2h7v10H1z" fill="#f1b93b"/><path d="M1 6h14v8H1z" fill="#ffdc72"/><path d="M4 14v-4h8v4h-2v-2H6v2z" fill="#3e94cf"/></svg></button>
  <button class="tb run" aria-label="OBS"><svg viewBox="0 0 16 16"><circle cx="8" cy="8" r="7" fill="#24242a" stroke="#ddd"/><path d="M8 2Q4 5 8 8M13 9Q11 5 8 8M4 12Q9 12 8 8" fill="none" stroke="#aaa" stroke-width="1.500"/><circle cx="12" cy="12" r="4" fill="#e20d16"/></svg></button>
  <button class="tb run act" aria-label="Allplan"><svg viewBox="0 0 16 16"><path d="M0 0h16v16H0z" fill="#000" stroke="#888"/><path d="M5 12L8 4L11 12" fill="none" stroke="#fff" stroke-width="1.800"/></svg></button>
  <div class="tray">
    <svg class="wx" viewBox="0 0 16 16"><circle cx="7" cy="9" r="6" fill="#f4a52e"/><path d="M0 7Q1 3 5 3Q9 4 9 8H1M6 15Q6 10 11 10Q15 11 15 15Z" fill="#dbe8f7"/><circle cx="12" cy="4" r="4" fill="#d52a2a"/><path d="M12 2v3M12 6v1" stroke="#fff"/></svg>
    <span class="temp">-2°C &nbsp;Teilw. sonnig</span>
    <svg viewBox="0 0 10 10"><path d="M1 7l4-4 4 4" fill="none" stroke="#eee"/></svg>
    <svg viewBox="0 0 10 10"><path d="M0 7Q0 3 4 3Q9 1 10 7Z" fill="#ccc"/><circle cx="7" cy="7" r="3" fill="#2689c9"/></svg>
    <svg viewBox="0 0 10 10"><rect x="3" y="0" width="4" height="6" rx="2" fill="#eee"/><path d="M2 4Q2 8 5 8Q8 8 8 4M5 8v2" fill="none" stroke="#eee"/></svg>
    <svg viewBox="0 0 10 10"><path d="M3 2h7v5H3zM0 1h3v3H0zM2 4v5M4 9h4" fill="none" stroke="#eee"/></svg>
    <svg viewBox="0 0 10 10"><path d="M0 4h2l2-2v6L2 6H0zM6 3q1 2 0 4M8 1q2 4 0 8" fill="none" stroke="#eee"/></svg>
    <time><span>10:19</span><span>08.01.2024</span></time>
    <svg class="msg" viewBox="0 0 16 16"><path d="M1 2h11v9H5l-2 2v-2H1z" fill="#eee"/><path d="M3 5h7M3 7h7" stroke="#555"/><circle cx="11" cy="11" r="4" fill="#40302e" stroke="#ccc"/><path d="M10 10l1-1v4" fill="none" stroke="#fff"/></svg>
  </div>
</footer>
</div>
</body>
</html>
```
FILE: styles.css
```css
*{box-sizing:border-box}
body{margin:0;font:8px/12px Roboto,"Noto Sans",sans-serif;color:#222;background:#e4ecf4}
button{font:inherit;color:inherit;border:0;padding:0;margin:0;background:none;display:flex;align-items:center;justify-content:center;white-space:nowrap}
input,select{font:inherit;color:inherit;margin:0;min-width:0}
svg{display:block;flex:none}
h1,h2{margin:0;font:inherit}
.ln{fill:none;stroke:#55779f}
.app{height:100vh;display:flex;flex-direction:column;overflow:hidden}
.dd{flex:none;border:2px solid transparent;border-top:3px solid #222;border-bottom:0;width:4px;height:3px}
.dim{opacity:.5}

.titlebar{flex:none;height:17px;display:grid;grid-template-columns:540fr auto 408fr;align-items:center;background:linear-gradient(#cfdfee,#9dbad6)}
.titlebar h1{font-family:"Open Sans",sans-serif;color:#1f2d3d;white-space:nowrap}
.quick{display:flex;align-items:center;gap:3px;padding-left:2px}
.qb,.qb svg{width:11px;height:11px}
.qb.first{margin-left:10px}
.dd.more{margin-left:10px}
.winctl{display:flex;align-items:center;justify-content:flex-end;gap:4px;padding-right:2px}
.winctl svg{width:11px;height:11px}
.login{gap:2px;margin-right:2px;color:#1c2c3d}
.help{width:11px;height:11px;border-radius:6px;border:1px solid #345;background:#eef4fa;line-height:9px}

.ribbon{flex:none;height:66px;display:flex;background:#f5f8fb;border-bottom:1px solid #8da2b8}
.role{width:31px;flex:none;flex-direction:column;gap:4px;background:#f5f8fb;padding-top:2px}
.role svg{width:22px;height:22px}
.ribmain{flex:1;min-width:0;display:flex;flex-direction:column}
.tabs{height:18px;flex:none;display:flex;background:#fff;border-bottom:1px solid #c3cbd3;padding-top:2px}
.tab{padding:0 7px;height:16px}
.tab.on{background:#f5f8fb;border:1px solid #c3cbd3;border-bottom:0;padding:0 6px}
.tab.hov{background:#ececee}
.tabtools{margin-left:auto;display:flex;gap:6px;padding-right:5px}
.tabtools svg{width:11px;height:11px}
.groups{flex:1;display:flex;max-width:1062px}
.grp{display:flex;flex-direction:column;flex-basis:0;min-width:0;border-right:1px solid #b9c4cf}
.grp h2{height:9px;line-height:9px;font-size:6px;color:#66727e;text-align:center;white-space:nowrap;background:#dbe2ea}
.grp.sel h2{background:#bfd6ea}
.g237{flex-grow:237}.g136{flex-grow:136}.g114{flex-grow:114}.g100{flex-grow:100}.g73{flex-grow:73}.g52{flex-grow:52}.g51{flex-grow:51}.g31{flex-grow:31}.g29{flex-grow:29}.g28{flex-grow:28}
.tools{flex:1;display:flex;padding:6px 4px 0}
.rb{flex:1;min-width:0;flex-direction:column;justify-content:flex-start}
.rb svg{width:19px;height:19px}
.rb::after{content:"";border:2px solid transparent;border-top:3px solid #111;border-bottom:0;margin-top:4px}
.nodd .rb::after{display:none}
.off .rb::after{border-top-color:#999}
.rb.big{font-weight:700;font-size:18px;line-height:19px;color:#3e6592}
.rb.abc{font-weight:700;font-size:9px;line-height:19px;color:#3e6592}
.sep{width:1px;margin:0 3px 4px 4px;background:#c4ccd5}

.work{flex:1;min-height:0;display:flex;position:relative}
.panel{width:274px;flex:none;display:flex;flex-direction:column;background:#fff;border:solid #b9cad8;border-width:0 2px 1px 1px}
.phead{height:13px;flex:none;display:flex;align-items:center;gap:3px;padding:0 2px;background:linear-gradient(#e2ebf4,#c5d5e5);color:#44566a}
.phead span{flex:1}
.phead svg{width:9px;height:9px}
.ptabs{height:17px;flex:none;display:flex;gap:2px;align-items:flex-end;border-bottom:1px solid #b6c8da;background:#e8eff6}
.ptabs button{width:33px;flex:none;height:13px;border:1px solid #a8bfd4;border-bottom:0;border-radius:3px 3px 0 0;background:linear-gradient(#f3f7fb,#c9dbeb)}
.ptabs .on{height:16px;background:#fff}
.ptabs .last{justify-content:flex-start;padding-left:2px}
.combo{position:relative;display:flex;align-items:center;border:1px solid #c5d3df;background:#fff}
.combo select{appearance:none;flex:1;border:0;background:none;padding:0 3px;height:12px}
.combo .arrow{flex:none;width:9px;height:12px;background:linear-gradient(#eef3f8,#c5d5e4);display:flex;align-items:center;justify-content:center}
.arrow::after{content:"";border:2px solid transparent;border-top:3px solid #111;border-bottom:0}
.panel>.combo{margin:2px 50px 2px 1px;height:14px;color:#aaa;flex:none}
.props{flex:1;display:flex;flex-direction:column;min-height:0}
.sec,.row{flex:1 1 0;min-height:0;display:flex;align-items:center;white-space:nowrap}
.sec{font-family:"Open Sans",sans-serif;font-weight:700;padding-left:4px;gap:4px;color:#111}
.sec::before,.sub::before{content:"";border:3px solid transparent;border-top:4px solid #666;border-bottom:0}
.sec::after{content:"";height:1px;flex:1;background:linear-gradient(90deg,#cbd5de,#fff);margin:0 25px 0 2px}
.row{color:#555;padding-right:4px}
.row span{width:131px;text-align:right;flex:none}
.row.ic span{width:115px}
.row>svg,.wheel{width:11px;height:11px;margin:0 7px 0 4px}
.row b{font-weight:400;color:#333;display:flex;align-items:center;flex:1;min-width:0}
.row:not(.ic) b{margin-left:6px}
.row.ro b{color:#a5a5a5}
.sub::before{margin-left:4px;margin-right:-10px}
.row input{appearance:none;width:9px;height:9px;border:1px solid #a6b8c8;background:#eaf1f8}
.row input:disabled{opacity:.5}
.thin{flex:1;height:1px;background:#888;margin-left:8px}
.dash{width:62px;height:4px;margin-left:8px}
.blue{flex:1;height:8px;background:#2200e8;border:1px solid #11118a;margin-left:2px}
.wheel{border-radius:6px;background:conic-gradient(#e4c84f,#e5745d,#b96ac2,#6585d7,#5bb9a3,#a3c95d,#e4c84f)}
.rule{height:66px;flex:none;margin:0 4px 0 2px;background:linear-gradient(#d7e0e8,#d7e0e8) 0 25px/100% 2px no-repeat}
.pfoot{height:18px;flex:none;display:flex;align-items:center;gap:4px;padding:0 4px 0 3px;background:#dce6ef}
.pfoot svg{width:11px;height:11px}
.combo.low{flex:1;height:15px}

.plan{flex:668;min-width:0;position:relative;margin-left:3px;overflow:hidden}
.view3d{flex:331;min-width:0;position:relative;border-left:3px solid #cfdce8;border-right:1px solid #dde6ee;overflow:hidden}
.draw{width:100%;height:100%}
.vtab{position:absolute;top:1px;left:306px;height:16px;padding:0 5px;line-height:16px;font-size:9px;color:#5f7fa7;background:#e6ebf4cc}
.view3d .vtab{left:50%;transform:translateX(-50%);background:#cbd9e8;border:1px solid #d8e3ee;line-height:14px}
.brick{font:bold 10px "Liberation Sans",Arial,sans-serif;text-anchor:middle;fill:#333}
.meas{font:24px "Liberation Sans",Arial,sans-serif;fill:#000}
.sup{font-size:13px}
.lab{font:500 23px Roboto,sans-serif;fill:#000}
.num{font-size:18px}
.kipp{font:bold 19px "Liberation Sans",Arial,sans-serif}
.axis{font:bold 11px "DejaVu Sans",sans-serif;text-anchor:middle}

.float{position:absolute;left:220px;top:13px;width:360px;border:1px solid #7f9bb8;background:#dbe6f1;box-shadow:0 1px 2px #5678}
.float header{height:13px;display:flex;align-items:center;justify-content:space-between;padding:0 5px 0 3px;background:linear-gradient(#c8d9ea,#9ab6d1);color:#1d2d40}
.float header svg{width:6px;height:6px}
.opts{height:21px;display:flex;align-items:center;padding:0 3px 0 6px}
.opts svg{width:10px;height:10px;margin-right:3px}
.opts button{flex:1;height:14px;border:1px solid #8ca6c0;background:linear-gradient(#f2f6fa,#c6d8e8)}
.opts .on{background:#f2f6fa;border-color:#4d6177}

.inputbar{flex:none;height:20px;display:flex;background:#e4ecf4;border-bottom:1px solid #b6bfc8}
.inwrap{display:flex;align-items:center;background:#fff;padding:0 4px 0 8px;border-right:1px solid #c9d2da}
.inwrap strong{color:#111;width:95px;white-space:nowrap}
.inwrap>svg{width:11px;height:11px}
.inwrap input{height:14px;border:1px solid #cfd2b4;background:#fff;padding:0 4px;width:60px}
.inwrap .tiny{width:16px;border-color:#ddd}
.inwrap .hl{background:linear-gradient(#a9bfe2,#a9bfe2) 1px 50%/24px 10px no-repeat #fff;padding-left:1px}
.inwrap label{display:flex;align-items:center;gap:4px;margin-left:6px}
.inwrap label span{font-size:9px;font-weight:500;color:#334;width:11px;text-align:right}
.inwrap .r{color:#b04060}.inwrap .g{color:#2d9a45}
.snap{display:flex;gap:2px;margin-left:4px}
.snap button{width:15px;height:16px}
.snap .on{border:1px solid #7b9cbf;background:#dfeaf5}
.snap svg,.step2 svg{width:12px;height:12px}
.step{width:38px}
.step select{padding:0 1px}
.step2{width:35px;margin-left:4px}

.status{flex:none;height:15px;display:grid;grid-template-columns:593fr 122fr 220fr 83fr 62fr 61fr 34fr 35fr 70fr;align-items:center;background:#fff;color:#555;white-space:nowrap;border-bottom:1px solid #bbb}
.status span{padding-left:1px;border-left:1px solid #ddd}
.status span:first-child{border:0}
.status b{font-weight:400;color:#111}
.status em{font-style:normal;color:#aaa}
.status .note{display:flex;align-items:center;gap:4px;border:0}
.note svg{width:10px;height:10px}

.taskbar{flex:none;height:25px;display:flex;background:#2d1b19;color:#eee}
.tb{width:33px;height:25px}
.tb svg{width:16px;height:16px}
.tb.start{width:32px}
.tb.start svg{width:12px;height:12px}
.run{border-bottom:2px solid #70a9d8}
.act{background:#574946}
.search{display:flex;align-items:center;width:190px;background:#f3f2f2;color:#333;padding:0 4px 0 8px;font:10px/16px "Open Sans",sans-serif}
.search>svg:first-child{width:11px;height:11px}
.search input{flex:1;border:0;background:none;padding:0 0 0 8px;line-height:16px}
.search input::placeholder{color:#444}
.pic{width:42px;height:25px}
.tray{margin-left:auto;display:flex;align-items:center;gap:6px;padding-right:14px;font:9px/12px "Open Sans",sans-serif}
.tray svg{width:10px;height:10px}
.tray .wx,.tray .msg{width:15px;height:15px}
.temp{white-space:nowrap;margin-right:8px}
.tray time{display:flex;flex-direction:column;align-items:center;font:8px/12px Roboto,sans-serif;margin-right:4px}
```
